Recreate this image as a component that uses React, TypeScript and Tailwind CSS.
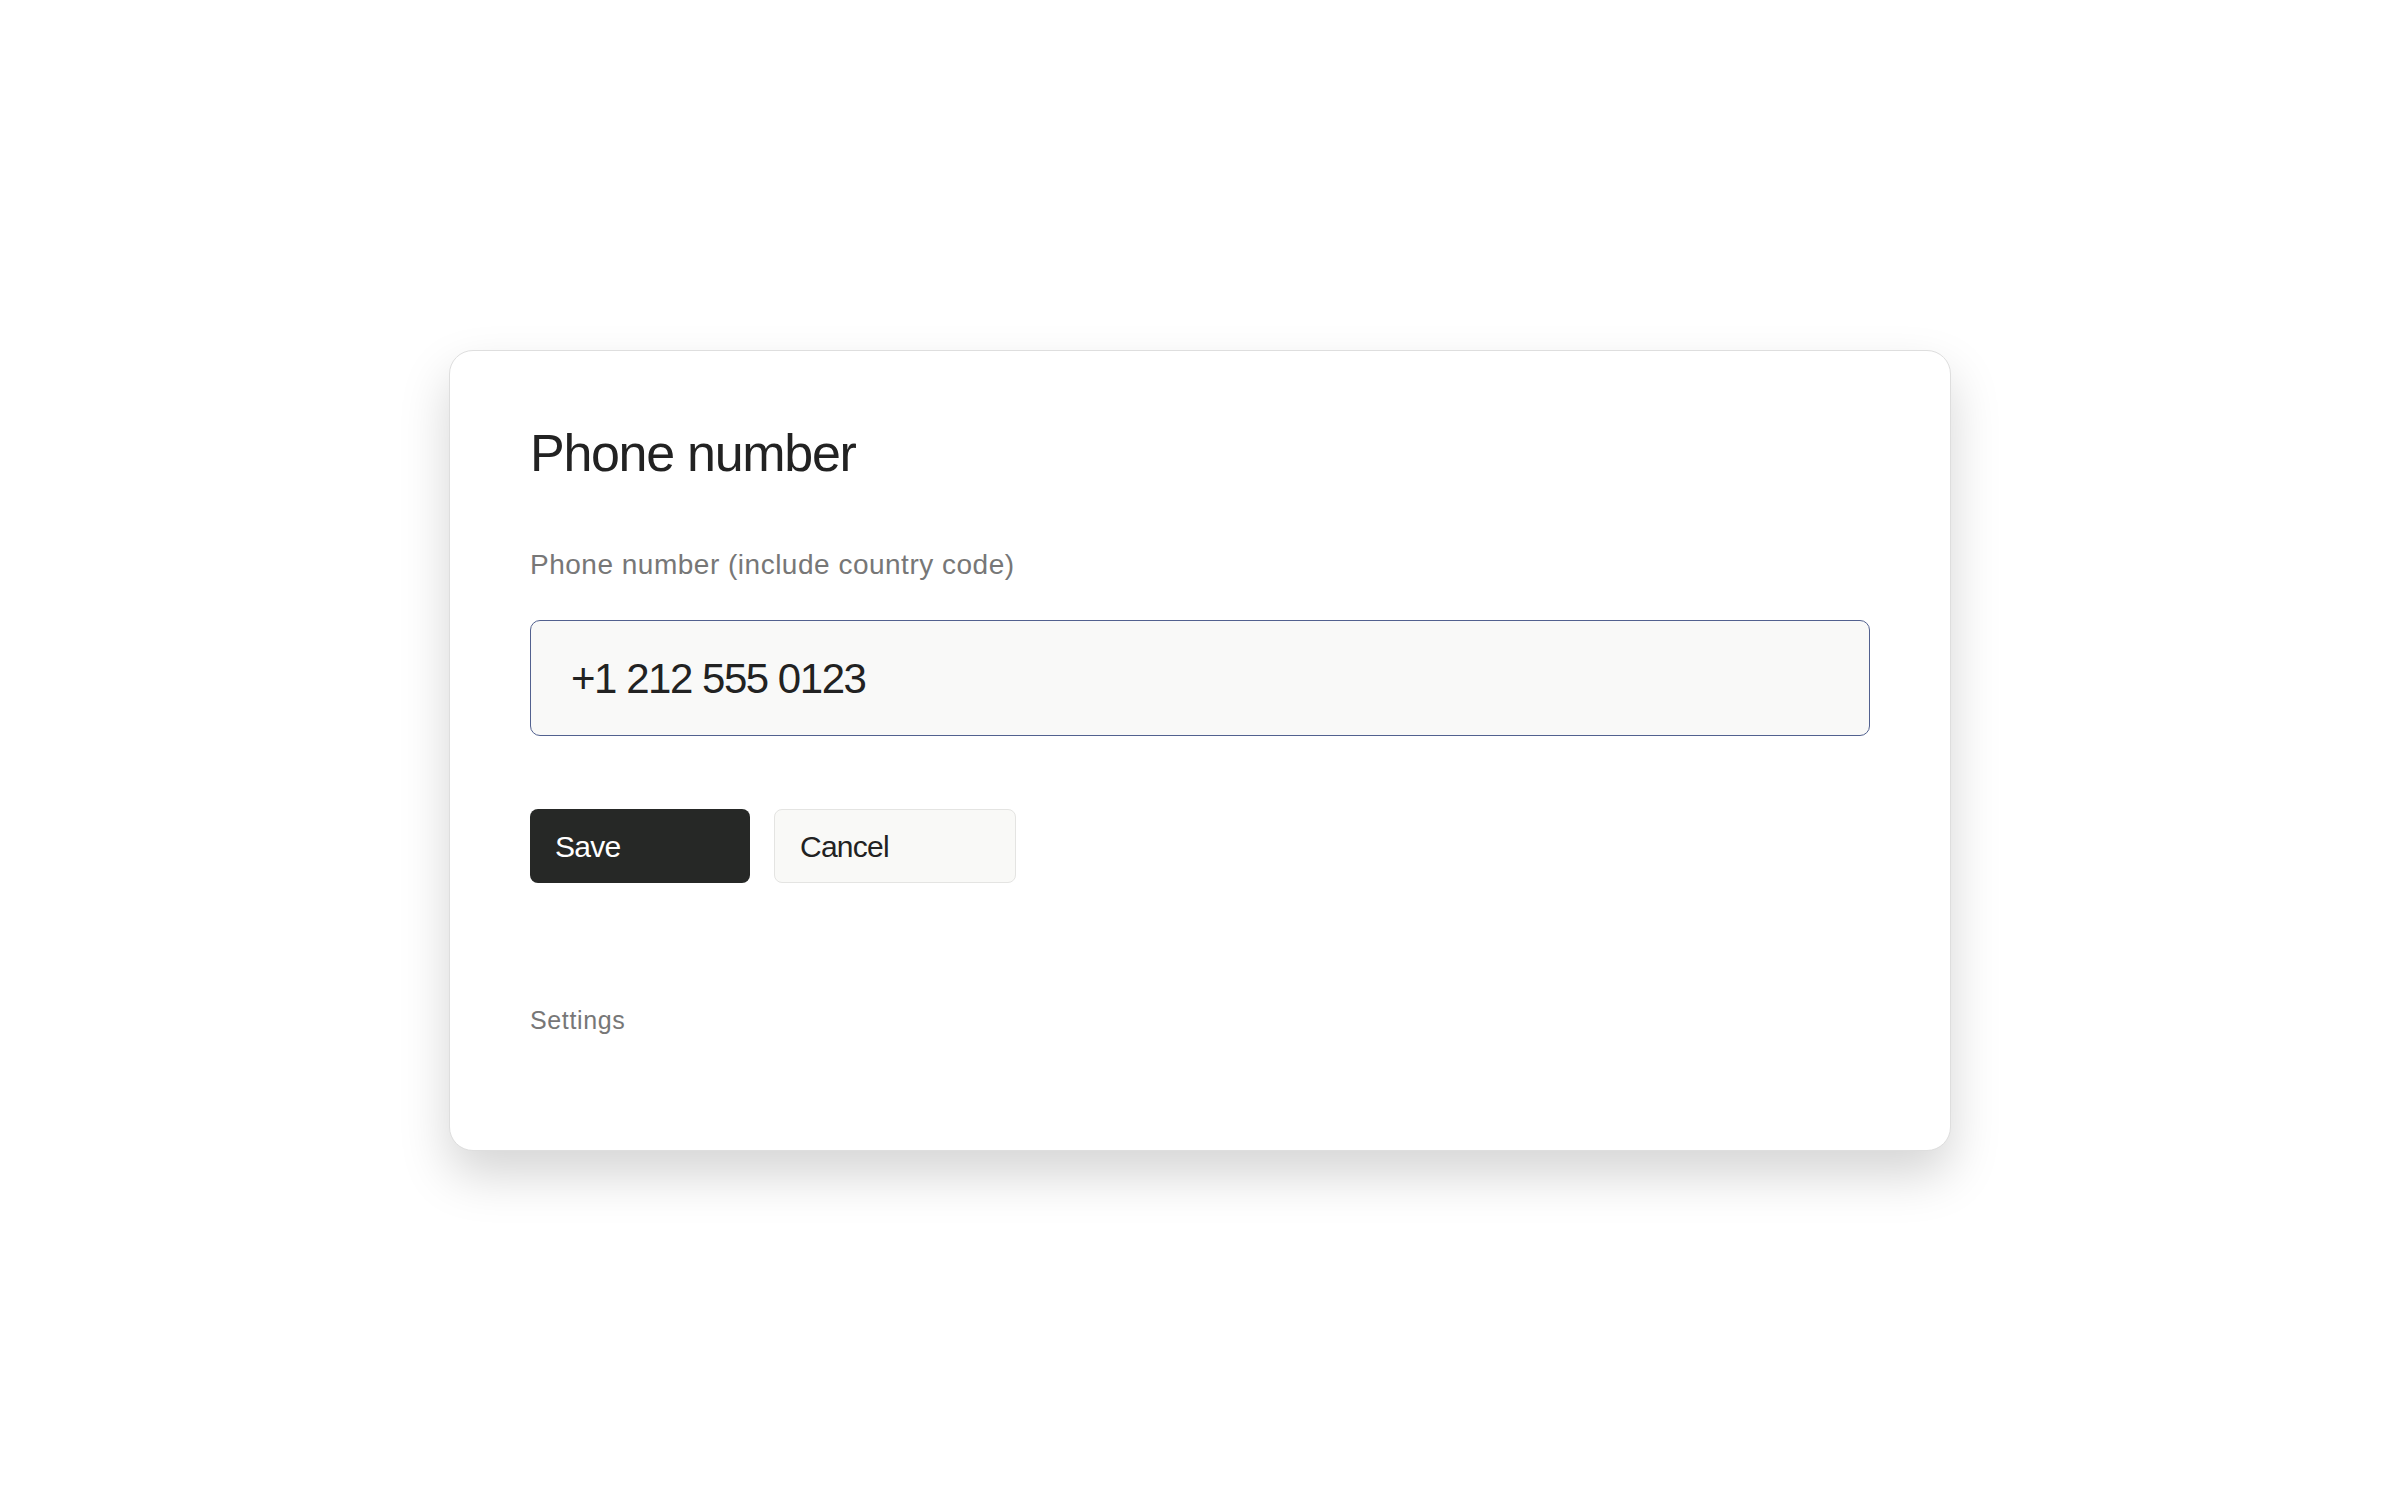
import { useState } from 'react'

export default function App() {
  const [phone, setPhone] = useState('+1 212 555 0123')

  return (
    <div className="flex h-[1500px] w-full items-center justify-center bg-white font-['Liberation_Sans',Arial,sans-serif]">
      <div className="w-[1502px] rounded-[24px] border border-[#dedede] bg-white px-[80px] pt-[72px] pb-[115px] shadow-[0_24px_50px_rgba(0,0,0,0.17)]">
        <h1 className="text-[52px] leading-[60px] font-normal tracking-[-0.025em] text-[#222]">Phone number</h1>

        <label htmlFor="phone" className="mt-[64px] block text-[28px] leading-[36px] tracking-[0.018em] text-[#777]">
          Phone number (include country code)
        </label>

        <input
          id="phone"
          type="tel"
          value={phone}
          onChange={(event) => setPhone(event.target.value)}
          className="mt-[37px] box-border block h-[116px] w-full rounded-[10px] border border-[#52618f] bg-[#f9f9f8] pt-[24px] pb-[22px] pl-[40px] text-[42px] tracking-[-0.035em] text-[#222] outline-none"
        />

        <div className="mt-[73px] flex gap-[24px]">
          <button
            type="button"
            className="flex h-[74px] w-[220px] items-center rounded-[8px] bg-[#262826] pt-[2px] pl-[25px] text-[30px] tracking-[-0.025em] text-white"
          >
            Save
          </button>
          <button
            type="button"
            className="flex h-[74px] w-[242px] items-center rounded-[8px] border border-[#e4e4e2] bg-[#f9f9f7] pt-[2px] pl-[25px] text-[30px] tracking-[-0.025em] text-[#222]"
          >
            Cancel
          </button>
        </div>

        <p className="mt-[122px] text-[25px] leading-[30px] tracking-[0.025em] text-[#777]">Settings</p>
      </div>
    </div>
  )
}
